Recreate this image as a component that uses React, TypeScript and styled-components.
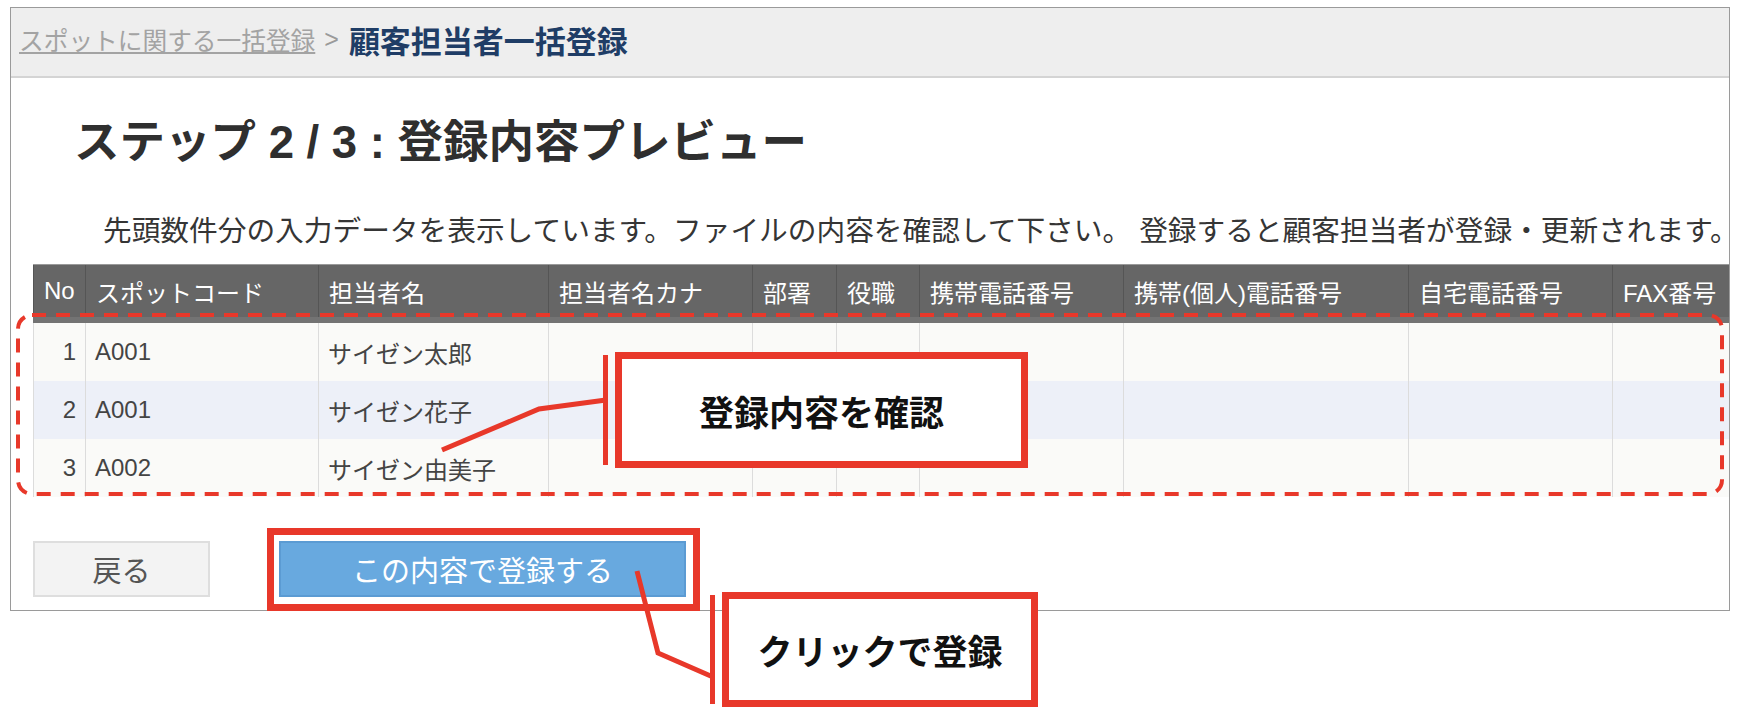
import React from 'react'
import styled, { createGlobalStyle } from 'styled-components'

const RED = '#e8382a'

const GlobalStyle = createGlobalStyle`
  html, body {
    margin: 0;
    padding: 0;
    background: #fff;
  }
  body {
    font-family: 'Liberation Sans', 'Noto Sans CJK JP', sans-serif;
    color: #333;
  }
`

type Column = {
  label: string
  width: number
  align?: 'left' | 'right'
}

type Contact = {
  no: number
  spot: string
  name: string
}

const columns: Column[] = [
  { label: 'No', width: 52, align: 'right' },
  { label: 'スポットコード', width: 233 },
  { label: '担当者名', width: 230 },
  { label: '担当者名カナ', width: 204 },
  { label: '部署', width: 84 },
  { label: '役職', width: 83 },
  { label: '携帯電話番号', width: 204 },
  { label: '携帯(個人)電話番号', width: 285 },
  { label: '自宅電話番号', width: 204 },
  { label: 'FAX番号', width: 140 },
]

const rows: Contact[] = [
  { no: 1, spot: 'A001', name: 'サイゼン太郎' },
  { no: 2, spot: 'A001', name: 'サイゼン花子' },
  { no: 3, spot: 'A002', name: 'サイゼン由美子' },
]

const Page = styled.div`
  position: relative;
  width: 1756px;
  height: 724px;
  padding: 7px 0 0 10px;
  box-sizing: border-box;
  overflow: hidden;
`

const Frame = styled.section`
  width: 1720px;
  border: 1px solid #9a9a9a;
  box-sizing: border-box;
  padding-bottom: 13px;
`

const Header = styled.header`
  display: flex;
  align-items: center;
  height: 70px;
  padding: 0 0 6px 8px;
  box-sizing: border-box;
  background: #eeeeee;
  border-bottom: 2px solid #d4d4d4;
  white-space: nowrap;
`

const CrumbLink = styled.a`
  font-size: 24.7px;
  color: #a3a3a3;
  text-decoration: underline;
  cursor: pointer;
`

const CrumbSep = styled.span`
  margin: 0 10px 0 9px;
  font-size: 25px;
  color: #9a9a9a;
`

const CrumbCurrent = styled.span`
  font-size: 31px;
  font-weight: bold;
  color: #1f3d66;
`

const Title = styled.h1`
  margin: 38px 0 0 63px;
  font-size: 45.5px;
  line-height: 54px;
  font-weight: bold;
  color: #2f2f2f;
  white-space: nowrap;
`

const Lead = styled.p`
  margin: 44px 0 0 92px;
  font-size: 28.7px;
  line-height: 34px;
  color: #353535;
  white-space: nowrap;
`

const TableWrap = styled.div`
  margin: 16px 0 0 22px;
  overflow: hidden;
`

const Table = styled.table`
  border-collapse: collapse;
  table-layout: fixed;
  width: ${columns.reduce((sum, c) => sum + c.width, 0)}px;
`

const Th = styled.th`
  height: 52px;
  padding: 0 10px;
  background: #666;
  color: #fff;
  font-size: 24px;
  font-weight: normal;
  text-align: left;
  white-space: nowrap;
  overflow: hidden;
  border-top: 1px solid #9a9a9a;
  border-left: 1px solid #555;
  border-bottom: 6px solid #737373;
`

const Tr = styled.tr<{ $alt: boolean }>`
  background: ${(p) => (p.$alt ? '#edf0f8' : '#fafaf8')};
`

const Td = styled.td<{ $align?: 'left' | 'right' }>`
  height: 58px;
  padding: 0 9px;
  font-size: 24px;
  color: #444;
  text-align: ${(p) => p.$align || 'left'};
  white-space: nowrap;
  border-left: 1px solid #dcdcdc;
`

const Actions = styled.div`
  display: flex;
  align-items: center;
  gap: 69px;
  margin: 44px 0 0 22px;
`

const BaseButton = styled.button`
  height: 56px;
  padding: 0;
  box-sizing: border-box;
  font-family: inherit;
  font-size: 29px;
  cursor: pointer;
`

const BackButton = styled(BaseButton)`
  width: 177px;
  background: #f3f3f3;
  border: 2px solid #dedede;
  color: #555;
`

const SubmitWrap = styled.div`
  position: relative;
  &::after {
    content: '';
    position: absolute;
    left: -12px;
    right: -14px;
    top: -13px;
    bottom: -14px;
    border: 7px solid ${RED};
    pointer-events: none;
  }
`

const SubmitButton = styled(BaseButton)`
  display: block;
  width: 407px;
  background: #68a9df;
  border: 2px solid #5b9bd3;
  color: #fff;
`

const Marks = styled.svg`
  position: absolute;
  left: 0;
  top: 0;
  width: 1756px;
  height: 724px;
  pointer-events: none;
`

const Callout = styled.div<{ $x: number; $y: number; $w: number; $h: number }>`
  position: absolute;
  left: ${(p) => p.$x}px;
  top: ${(p) => p.$y}px;
  width: ${(p) => p.$w}px;
  height: ${(p) => p.$h}px;
  display: flex;
  align-items: center;
  justify-content: center;
  box-sizing: border-box;
  border: 7px solid ${RED};
  background: #fff;
  font-size: 35px;
  font-weight: bold;
  color: #111;
  white-space: nowrap;
  &::before {
    content: '';
    position: absolute;
    left: -19px;
    top: -4px;
    bottom: -4px;
    width: 5px;
    background: ${RED};
  }
`

const PreviewTable = () => {
  return (
    <TableWrap>
      <Table>
        <colgroup>
          {columns.map((c) => (
            <col key={c.label} style={{ width: c.width }} />
          ))}
        </colgroup>
        <thead>
          <tr>
            {columns.map((c) => (
              <Th key={c.label}>{c.label}</Th>
            ))}
          </tr>
        </thead>
        <tbody>
          {rows.map((row, index) => (
            <Tr key={row.no} $alt={index % 2 === 1}>
              <Td $align="right">{row.no}</Td>
              <Td>{row.spot}</Td>
              <Td>{row.name}</Td>
              {columns.slice(3).map((c) => (
                <Td key={c.label} />
              ))}
            </Tr>
          ))}
        </tbody>
      </Table>
    </TableWrap>
  )
}

const App = () => {
  return (
    <Page>
      <GlobalStyle />
      <Frame>
        <Header>
          <CrumbLink>スポットに関する一括登録</CrumbLink>
          <CrumbSep>&gt;</CrumbSep>
          <CrumbCurrent>顧客担当者一括登録</CrumbCurrent>
        </Header>
        <Title>ステップ 2 / 3 : 登録内容プレビュー</Title>
        <Lead>
          先頭数件分の入力データを表示しています。ファイルの内容を確認して下さい。 登録すると顧客担当者が登録・更新されます。
        </Lead>
        <PreviewTable />
        <Actions>
          <BackButton>戻る</BackButton>
          <SubmitWrap>
            <SubmitButton>この内容で登録する</SubmitButton>
          </SubmitWrap>
        </Actions>
      </Frame>

      {/* dashed outline round the data rows, plus the leader lines */}
      <Marks viewBox="0 0 1756 724">
        <rect
          x={18}
          y={315}
          width={1704}
          height={179}
          rx={14}
          fill="none"
          stroke={RED}
          strokeWidth={4}
          strokeDasharray="14 10"
        />
        <polyline points="606,400 539,409 442,450" fill="none" stroke={RED} strokeWidth={5} />
        <polyline points="637,571 658,653 713,677" fill="none" stroke={RED} strokeWidth={5} />
      </Marks>

      <Callout $x={615} $y={352} $w={413} $h={116}>
        登録内容を確認
      </Callout>
      <Callout $x={722} $y={592} $w={316} $h={115}>
        クリックで登録
      </Callout>
    </Page>
  )
}

export default App
